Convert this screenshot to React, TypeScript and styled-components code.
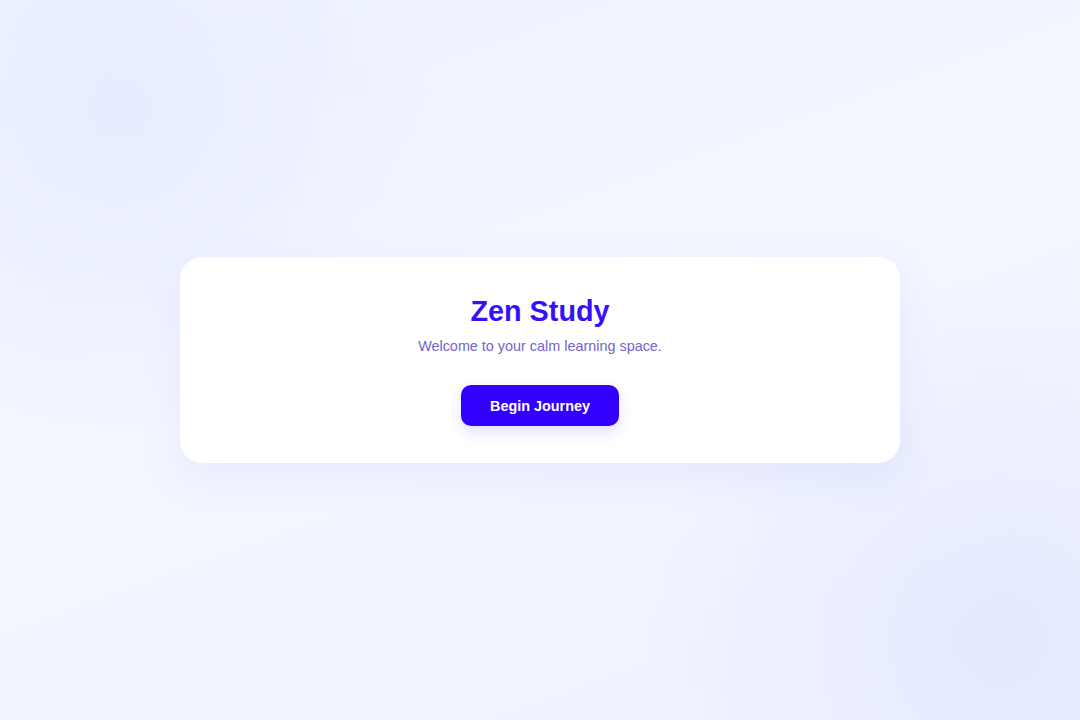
import styled, { createGlobalStyle } from "styled-components";

const GlobalStyle = createGlobalStyle`
  html, body {
    margin: 0;
    padding: 0;
    height: 100%;
  }
  body {
    font-family: "Liberation Sans", Arial, sans-serif;
  }
  #root {
    height: 100%;
  }
`;

const Page = styled.main`
  width: 100vw;
  height: 100vh;
  display: flex;
  align-items: center;
  justify-content: center;
  background:
    radial-gradient(circle at 120px 110px, rgba(226, 233, 255, 0.7) 0, rgba(230, 236, 255, 0.45) 130px, rgba(240, 243, 255, 0) 320px),
    radial-gradient(circle at 1000px 640px, rgba(226, 231, 255, 0.85) 0, rgba(229, 234, 255, 0.55) 160px, rgba(240, 243, 255, 0) 360px),
    linear-gradient(160deg, #eef2ff 0%, #f4f6ff 45%, #eff2ff 100%);
  overflow: hidden;
`;

const Card = styled.section`
  width: 720px;
  box-sizing: border-box;
  padding: 37px 40px 37px;
  background: #ffffff;
  border-radius: 22px;
  box-shadow: 0 14px 40px rgba(120, 140, 230, 0.1);
  display: flex;
  flex-direction: column;
  align-items: center;
  text-align: center;
`;

const Title = styled.h1`
  margin: 0;
  font-size: 28.8px;
  line-height: 34px;
  font-weight: 700;
  color: #3510ff;
`;

const Subtitle = styled.p`
  margin: 9px 0 0;
  font-size: 14.4px;
  line-height: 18px;
  color: #7066cc;
`;

const Button = styled.button`
  margin-top: 30px;
  width: 158px;
  height: 41px;
  border: none;
  border-radius: 10px;
  background: #3300ff;
  color: #ffffff;
  font-family: "Liberation Sans", Arial, sans-serif;
  font-size: 14.4px;
  font-weight: 700;
  cursor: pointer;
  box-shadow: 0 6px 14px rgba(80, 60, 255, 0.16);
`;

export default function App() {
  return (
    <>
      <GlobalStyle />
      <Page>
        <Card>
          <Title>Zen Study</Title>
          <Subtitle>Welcome to your calm learning space.</Subtitle>
          <Button>Begin Journey</Button>
        </Card>
      </Page>
    </>
  );
}
